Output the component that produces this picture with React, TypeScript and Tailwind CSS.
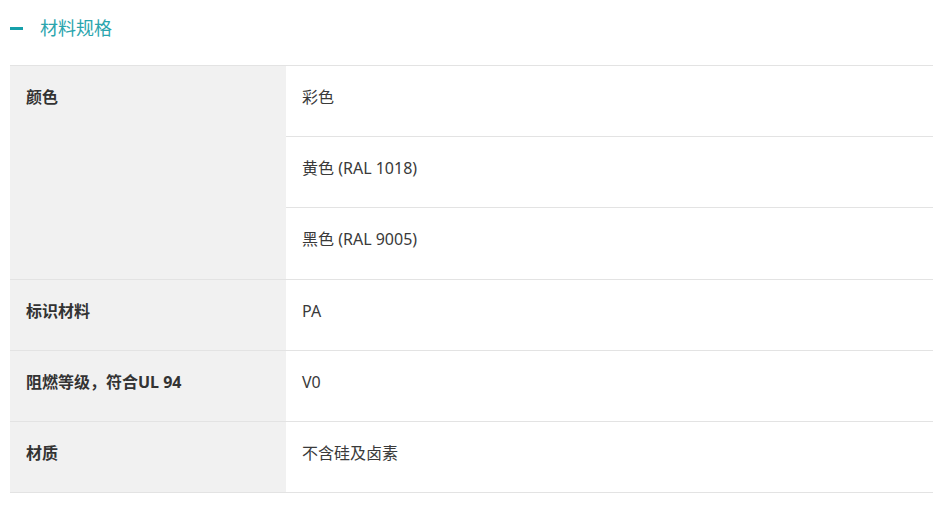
import React from 'react';

const rows = [
  { label: '颜色', values: ['彩色', '黄色 (RAL 1018)', '黑色 (RAL 9005)'] },
  { label: '标识材料', values: ['PA'] },
  { label: '阻燃等级，符合UL 94', values: ['V0'] },
  { label: '材质', values: ['不含硅及卤素'] },
];

export default function App() {
  return (
    <div
      className="bg-white w-[943px] h-[505px] px-[10px]"
      style={{ fontFamily: '"Noto Sans", "Noto Sans CJK SC", sans-serif' }}
    >
      <div className="flex items-center h-[56px]">
        <span className="block w-[13px] h-[3px] bg-[#16a0aa] mt-[1px]"></span>
        <span className="ml-[17px] text-[18px] leading-none text-[#2aa5ae]">材料规格</span>
      </div>
      <div className="mt-[9px] border-t border-[#e3e3e3] w-[923px]">
        {rows.map((row) => (
          <div key={row.label} className="flex border-b border-[#e3e3e3]">
            <div className="w-[276px] shrink-0 bg-[#f1f1f1] pl-[16px] pt-[19px] text-[16px] leading-[24px] font-bold text-[#333]">
              {row.label}
            </div>
            <div className="flex-1">
              {row.values.map((v, i) => {
                const last = i === row.values.length - 1;
                const multi = row.values.length > 1;
                return (
                  <div
                    key={v}
                    className={
                      'pl-[16px] pt-[19px] text-[16px] leading-[24px] text-[#3a3a3a] ' +
                      (!last ? 'h-[71px] border-b border-[#e3e3e3]' : multi ? 'h-[71px]' : 'h-[70px]')
                    }
                  >
                    {v}
                  </div>
                );
              })}
            </div>
          </div>
        ))}
      </div>
    </div>
  );
}
